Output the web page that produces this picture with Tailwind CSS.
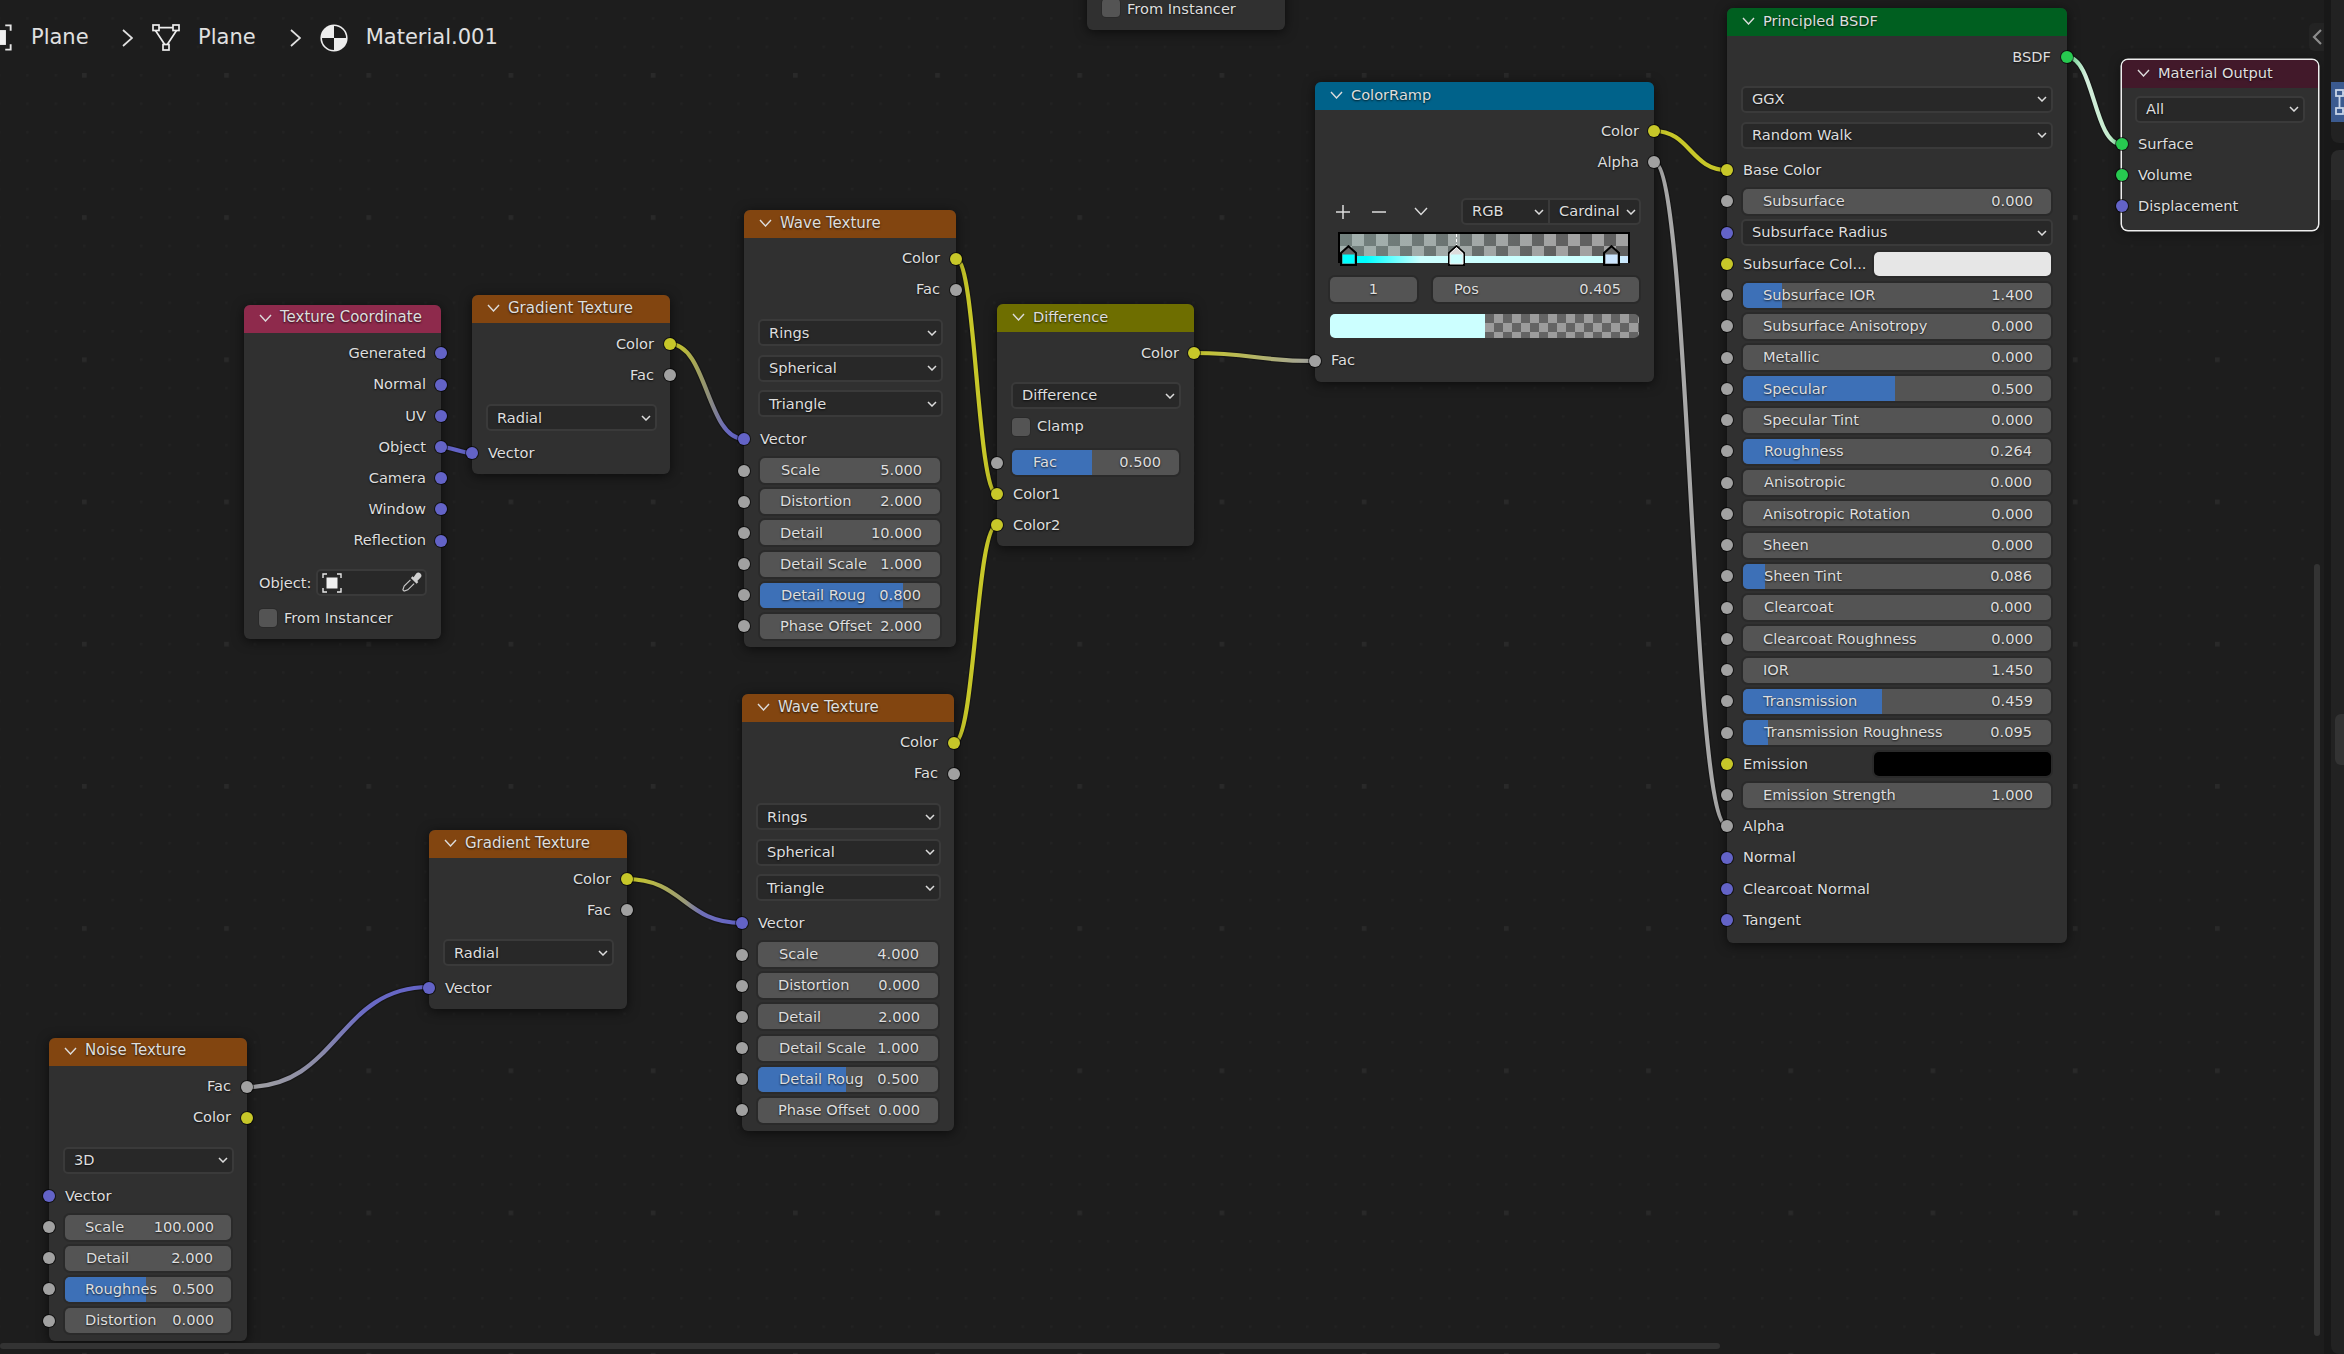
<!DOCTYPE html>
<html lang="en">
<head>
<meta charset="utf-8">
<title>Shader nodes</title>
<script src="https://cdn.jsdelivr.net/npm/@tailwindcss/browser@4"></script>
</head>
<body class="bg-[#1d1d1d]">
<svg class="absolute w-0 h-0">
  <symbol id="hc" viewBox="0 0 13 8"><path d="M1 1l5.5 6L12 1" fill="none" stroke="#dcdcdc" stroke-width="1.4"/></symbol>
  <symbol id="dc" viewBox="0 0 10 6"><path d="M1 1l4 4 4-4" fill="none" stroke="#dcdcdc" stroke-width="1.5"/></symbol>
  <symbol id="ob" viewBox="0 0 20 20"><path d="M1 5V1h4M15 1h4v4M19 15v4h-4M5 19H1v-4" fill="none" stroke="#e6e6e6" stroke-width="1.4"/><rect x="4.5" y="4.5" width="11" height="11" fill="#f0f0f0"/></symbol>
</svg>
<div class="relative w-[2344px] h-[1354px] overflow-hidden bg-[#1d1d1d] font-['DejaVu_Sans',sans-serif] text-[14.6px] leading-none text-[#dedede] [text-shadow:0_1px_2px_rgba(0,0,0,.75)]">

  <!-- grid -->
  <svg class="absolute inset-0" width="2344" height="1354">
    <defs>
      <pattern id="gs" patternUnits="userSpaceOnUse" x="83" y="74" width="28.44" height="28.44"><rect width="2.4" height="2.4" fill="#222222"/></pattern>
      <pattern id="gb" patternUnits="userSpaceOnUse" x="82" y="73" width="142.2" height="142.2"><rect width="4.6" height="4.6" fill="#292929"/></pattern>
      <linearGradient id="g2" gradientUnits="userSpaceOnUse" x1="676" x2="740" y1="0" y2="0"><stop offset="0" stop-color="#c7c729"/><stop offset=".5" stop-color="#8f8f78"/><stop offset=".8" stop-color="#6868c0"/><stop offset="1" stop-color="#6363c7"/></linearGradient>
      <linearGradient id="g3" gradientUnits="userSpaceOnUse" x1="1194" x2="1315" y1="0" y2="0"><stop offset="0" stop-color="#c7c729"/><stop offset="1" stop-color="#a1a1a1"/></linearGradient>
      <linearGradient id="g4" gradientUnits="userSpaceOnUse" x1="247" x2="429" y1="0" y2="0"><stop offset="0" stop-color="#a1a1a1"/><stop offset=".4" stop-color="#8a8aa8"/><stop offset=".65" stop-color="#6a6ac4"/><stop offset="1" stop-color="#6363c7"/></linearGradient>
      <linearGradient id="g5" gradientUnits="userSpaceOnUse" x1="632" x2="738" y1="0" y2="0"><stop offset="0" stop-color="#c7c729"/><stop offset=".5" stop-color="#9a9a78"/><stop offset=".65" stop-color="#6f6fb8"/><stop offset="1" stop-color="#6363c7"/></linearGradient>
      <linearGradient id="g6" gradientUnits="userSpaceOnUse" x1="2067" x2="2121" y1="0" y2="0"><stop offset="0" stop-color="#5fd98a"/><stop offset=".35" stop-color="#d4ecdc"/><stop offset=".8" stop-color="#c4eccd"/><stop offset="1" stop-color="#5fd98a"/></linearGradient>
    </defs>
    <rect width="2344" height="1354" fill="url(#gs)"/>
    <rect width="2344" height="1354" fill="url(#gb)"/>
  </svg>

  <!-- wires -->
  <svg class="absolute inset-0" width="2344" height="1354" fill="none">
    <g stroke="#141414" stroke-opacity=".75" stroke-width="6.6">
      <path d="M441 447C452 447 461 453 472 453"/>
      <path d="M670 344C707 344 707 439 744 439"/>
      <path d="M956 259C976 259 977 494 997 494"/>
      <path d="M954 743C975 743 976 525 997 525"/>
      <path d="M1194 353C1254 353 1255 361 1315 361"/>
      <path d="M1654 131C1690 131 1691 170 1727 170"/>
      <path d="M1654 162C1690 162 1691 826 1727 826"/>
      <path d="M2067 57C2094 57 2094 144 2121 144"/>
      <path d="M247 1087C338 1087 338 987 429 987"/>
      <path d="M626 879C684 879 684 923 742 923"/>
    </g>
    <g stroke-width="4.2">
      <path stroke="#6363c7" d="M441 447C452 447 461 453 472 453"/>
      <path stroke="url(#g2)" d="M670 344C707 344 707 439 744 439"/>
      <path stroke="#c7c729" d="M956 259C976 259 977 494 997 494"/>
      <path stroke="#c7c729" d="M954 743C975 743 976 525 997 525"/>
      <path stroke="url(#g3)" d="M1194 353C1254 353 1255 361 1315 361"/>
      <path stroke="#c7c729" d="M1654 131C1690 131 1691 170 1727 170"/>
      <path stroke="#a8a8a8" d="M1654 162C1690 162 1691 826 1727 826"/>
      <path stroke="url(#g6)" d="M2067 57C2094 57 2094 144 2121 144"/>
      <path stroke="url(#g4)" d="M247 1087C338 1087 338 987 429 987"/>
      <path stroke="url(#g5)" d="M626 879C684 879 684 923 742 923"/>
    </g>
  </svg>

  <!-- breadcrumb -->
  <div class="absolute left-[-15px] top-[24px] h-[27px] flex items-center text-[21px] text-[#e0e0e0] [text-shadow:none]">
    <svg class="w-[27px] h-[27px]"><use href="#ob"/></svg>
    <span class="ml-[19px]">Plane</span>
    <svg class="ml-[33px] w-[11px] h-[18px]" viewBox="0 0 11 18" fill="none"><path d="M1 1l9 8-9 8" stroke="#e0e0e0" stroke-width="1.7"/></svg>
    <svg class="ml-[19px] w-[28px] h-[27px]" viewBox="0 0 28 27" fill="none" stroke="#ededed" stroke-width="1.7"><rect x="1" y="1" width="6" height="5.5"/><rect x="21" y="1" width="6" height="5.5"/><rect x="11" y="20.5" width="6" height="5.5"/><path d="M7 3.7h14M3.5 6.5l9.2 14M24.5 6.5l-9.2 14"/></svg>
    <span class="ml-[18.5px]">Plane</span>
    <svg class="ml-[34px] w-[11px] h-[18px]" viewBox="0 0 11 18" fill="none"><path d="M1 1l9 8-9 8" stroke="#e0e0e0" stroke-width="1.7"/></svg>
    <svg class="ml-[19px] w-[28px] h-[28px]" viewBox="0 0 28 28"><circle cx="14" cy="14" r="13.6" fill="#ededed"/><path d="M14 14V2A12 12 0 0 1 26 14zM14 14v12A12 12 0 0 1 2 14z" fill="#1d1d1d"/></svg>
    <span class="ml-[18px]">Material.001</span>
  </div>

  <!-- clipped top node -->
  <div class="absolute left-[1087px] top-[-20px] w-[198px] h-[50px] rounded-[6px] bg-[#303030] shadow-[0_2px_12px_rgba(0,0,0,.6)] flex items-end pl-[15px] pb-[13px]">
    <span class="size-[18px] rounded-[4px] bg-[#545454] ring-1 ring-[#2a2a2a]"></span><span class="ml-[7px]">From Instancer</span>
  </div>

  <!-- Texture Coordinate -->
  <div class="absolute left-[244px] top-[304.5px] w-[197px] rounded-[6px] bg-[#303030] shadow-[0_2px_12px_rgba(0,0,0,.6)] pb-[7.5px]">
    <div class="h-[28px] rounded-t-[6px] bg-[#8e2a4c] flex items-center pl-[15px] pb-[1.5px] gap-[8px]"><svg class="w-[13px] h-[8px]"><use href="#hc"/></svg><span class="text-[15px]">Texture Coordinate</span></div>
    <div class="pt-[5.4px]">
      <div class="relative h-[31.2px] flex items-center justify-end pr-[15px]">Generated<span class="absolute right-[-6px] top-1/2 -translate-y-1/2 size-[12px] rounded-full bg-[#6363c7] ring-1 ring-black/60"></span></div>
      <div class="relative h-[31.2px] flex items-center justify-end pr-[15px]">Normal<span class="absolute right-[-6px] top-1/2 -translate-y-1/2 size-[12px] rounded-full bg-[#6363c7] ring-1 ring-black/60"></span></div>
      <div class="relative h-[31.2px] flex items-center justify-end pr-[15px]">UV<span class="absolute right-[-6px] top-1/2 -translate-y-1/2 size-[12px] rounded-full bg-[#6363c7] ring-1 ring-black/60"></span></div>
      <div class="relative h-[31.2px] flex items-center justify-end pr-[15px]">Object<span class="absolute right-[-6px] top-1/2 -translate-y-1/2 size-[12px] rounded-full bg-[#6363c7] ring-1 ring-black/60"></span></div>
      <div class="relative h-[31.2px] flex items-center justify-end pr-[15px]">Camera<span class="absolute right-[-6px] top-1/2 -translate-y-1/2 size-[12px] rounded-full bg-[#6363c7] ring-1 ring-black/60"></span></div>
      <div class="relative h-[31.2px] flex items-center justify-end pr-[15px]">Window<span class="absolute right-[-6px] top-1/2 -translate-y-1/2 size-[12px] rounded-full bg-[#6363c7] ring-1 ring-black/60"></span></div>
      <div class="relative h-[31.2px] flex items-center justify-end pr-[15px]">Reflection<span class="absolute right-[-6px] top-1/2 -translate-y-1/2 size-[12px] rounded-full bg-[#6363c7] ring-1 ring-black/60"></span></div>
    </div>
    <div class="mt-[13.2px] h-[27px] flex items-center pl-[15px] pr-[14px]">
      <span class="w-[57px]">Object:</span>
      <div class="flex-1 h-[27px] rounded-[5px] bg-[#282828] border-2 border-[#3a3a3a] flex items-center justify-between pl-[4px] pr-[3px]">
        <svg class="w-[20px] h-[20px]"><use href="#ob"/></svg>
        <svg class="w-[21px] h-[21px]" viewBox="0 0 20 20"><path d="M14.5 1.5a2.6 2.6 0 0 1 4 4l-3 3 1 1-1.6 1.6-5.5-5.5 1.6-1.6 1 1z" fill="#d0d0d0"/><path d="M9 7.5l-6 6-1.2 3.5 1.2 1.2 3.500-1.2 6-6" fill="none" stroke="#c8c8c8" stroke-width="1.1"/></svg>
      </div>
    </div>
    <div class="mt-[8px] h-[27px] flex items-center pl-[15px]"><span class="size-[18px] rounded-[4px] bg-[#545454] ring-1 ring-[#2a2a2a]"></span><span class="ml-[7px]">From Instancer</span></div>
  </div>

  <!-- Gradient Texture 1 -->
  <div class="absolute left-[472px] top-[295px] w-[198px] rounded-[6px] bg-[#303030] shadow-[0_2px_12px_rgba(0,0,0,.6)] pb-[5.4px]">
    <div class="h-[28px] rounded-t-[6px] bg-[#824510] flex items-center pl-[15px] pb-[1.5px] gap-[8px]"><svg class="w-[13px] h-[8px]"><use href="#hc"/></svg><span class="text-[15px]">Gradient Texture</span></div>
    <div class="pt-[5.4px]">
      <div class="relative h-[31.2px] flex items-center justify-end pr-[16px]">Color<span class="absolute right-[-6px] top-1/2 -translate-y-1/2 size-[12px] rounded-full bg-[#c7c729] ring-1 ring-black/60"></span></div>
      <div class="relative h-[31.2px] flex items-center justify-end pr-[16px]">Fac<span class="absolute right-[-6px] top-1/2 -translate-y-1/2 size-[12px] rounded-full bg-[#a1a1a1] ring-1 ring-black/60"></span></div>
    </div>
    <div class="mt-[13.7px] ml-[14px] mr-[13px] h-[27px] rounded-[5px] bg-[#282828] border-2 border-[#3a3a3a] flex items-center justify-between pl-[9px] pr-[4px]"><span>Radial</span><svg class="w-[10px] h-[6px]"><use href="#dc"/></svg></div>
    <div class="mt-[5.9px] relative h-[31.2px] flex items-center pl-[16px]"><span class="absolute left-[-6px] top-1/2 -translate-y-1/2 size-[12px] rounded-full bg-[#6363c7] ring-1 ring-black/60"></span>Vector</div>
  </div>

  <!-- Gradient Texture 2 -->
  <div class="absolute left-[429px] top-[830px] w-[198px] rounded-[6px] bg-[#303030] shadow-[0_2px_12px_rgba(0,0,0,.6)] pb-[5.4px]">
    <div class="h-[28px] rounded-t-[6px] bg-[#824510] flex items-center pl-[15px] pb-[1.5px] gap-[8px]"><svg class="w-[13px] h-[8px]"><use href="#hc"/></svg><span class="text-[15px]">Gradient Texture</span></div>
    <div class="pt-[5.4px]">
      <div class="relative h-[31.2px] flex items-center justify-end pr-[16px]">Color<span class="absolute right-[-6px] top-1/2 -translate-y-1/2 size-[12px] rounded-full bg-[#c7c729] ring-1 ring-black/60"></span></div>
      <div class="relative h-[31.2px] flex items-center justify-end pr-[16px]">Fac<span class="absolute right-[-6px] top-1/2 -translate-y-1/2 size-[12px] rounded-full bg-[#a1a1a1] ring-1 ring-black/60"></span></div>
    </div>
    <div class="mt-[13.7px] ml-[14px] mr-[13px] h-[27px] rounded-[5px] bg-[#282828] border-2 border-[#3a3a3a] flex items-center justify-between pl-[9px] pr-[4px]"><span>Radial</span><svg class="w-[10px] h-[6px]"><use href="#dc"/></svg></div>
    <div class="mt-[5.9px] relative h-[31.2px] flex items-center pl-[16px]"><span class="absolute left-[-6px] top-1/2 -translate-y-1/2 size-[12px] rounded-full bg-[#6363c7] ring-1 ring-black/60"></span>Vector</div>
  </div>

  <!-- Wave Texture 1 -->
  <div class="absolute left-[744px] top-[210px] w-[212px] rounded-[6px] bg-[#303030] shadow-[0_2px_12px_rgba(0,0,0,.6)] pb-[5.4px]">
    <div class="h-[28px] rounded-t-[6px] bg-[#824510] flex items-center pl-[15px] pb-[1.5px] gap-[8px]"><svg class="w-[13px] h-[8px]"><use href="#hc"/></svg><span class="text-[15px]">Wave Texture</span></div>
    <div class="pt-[5px]">
      <div class="relative h-[31.2px] flex items-center justify-end pr-[16px]">Color<span class="absolute right-[-6px] top-1/2 -translate-y-1/2 size-[12px] rounded-full bg-[#c7c729] ring-1 ring-black/60"></span></div>
      <div class="relative h-[31.2px] flex items-center justify-end pr-[16px]">Fac<span class="absolute right-[-6px] top-1/2 -translate-y-1/2 size-[12px] rounded-full bg-[#a1a1a1] ring-1 ring-black/60"></span></div>
    </div>
    <div class="mt-[14px] ml-[14px] mr-[13px] h-[27px] rounded-[5px] bg-[#282828] border-2 border-[#3a3a3a] flex items-center justify-between pl-[9px] pr-[4px]"><span>Rings</span><svg class="w-[10px] h-[6px]"><use href="#dc"/></svg></div>
    <div class="mt-[8.5px] ml-[14px] mr-[13px] h-[27px] rounded-[5px] bg-[#282828] border-2 border-[#3a3a3a] flex items-center justify-between pl-[9px] pr-[4px]"><span>Spherical</span><svg class="w-[10px] h-[6px]"><use href="#dc"/></svg></div>
    <div class="mt-[8.5px] ml-[14px] mr-[13px] h-[27px] rounded-[5px] bg-[#282828] border-2 border-[#3a3a3a] flex items-center justify-between pl-[9px] pr-[4px]"><span>Triangle</span><svg class="w-[10px] h-[6px]"><use href="#dc"/></svg></div>
    <div class="mt-[6.4px] relative h-[31.2px] flex items-center pl-[16px]"><span class="absolute left-[-6px] top-1/2 -translate-y-1/2 size-[12px] rounded-full bg-[#6363c7] ring-1 ring-black/60"></span>Vector</div>
    <div class="relative h-[31.2px] px-4 flex items-center"><span class="absolute left-[-6px] top-1/2 -translate-y-1/2 size-[12px] rounded-full bg-[#a1a1a1] ring-1 ring-black/60"></span><div class="relative flex-1 h-[25px] rounded-[5px] bg-[#545454] ring-2 ring-[#2a2a2a] overflow-hidden flex items-center justify-between pl-[21px] pr-[18px]"><span class="relative">Scale</span><span class="relative">5.000</span></div></div>
    <div class="relative h-[31.2px] px-4 flex items-center"><span class="absolute left-[-6px] top-1/2 -translate-y-1/2 size-[12px] rounded-full bg-[#a1a1a1] ring-1 ring-black/60"></span><div class="relative flex-1 h-[25px] rounded-[5px] bg-[#545454] ring-2 ring-[#2a2a2a] overflow-hidden flex items-center justify-between pl-[20px] pr-[18px]"><span class="relative">Distortion</span><span class="relative">2.000</span></div></div>
    <div class="relative h-[31.2px] px-4 flex items-center"><span class="absolute left-[-6px] top-1/2 -translate-y-1/2 size-[12px] rounded-full bg-[#a1a1a1] ring-1 ring-black/60"></span><div class="relative flex-1 h-[25px] rounded-[5px] bg-[#545454] ring-2 ring-[#2a2a2a] overflow-hidden flex items-center justify-between pl-[20px] pr-[18px]"><span class="relative">Detail</span><span class="relative">10.000</span></div></div>
    <div class="relative h-[31.2px] px-4 flex items-center"><span class="absolute left-[-6px] top-1/2 -translate-y-1/2 size-[12px] rounded-full bg-[#a1a1a1] ring-1 ring-black/60"></span><div class="relative flex-1 h-[25px] rounded-[5px] bg-[#545454] ring-2 ring-[#2a2a2a] overflow-hidden flex items-center justify-between pl-[20px] pr-[18px]"><span class="relative">Detail Scale</span><span class="relative">1.000</span></div></div>
    <div class="relative h-[31.2px] px-4 flex items-center"><span class="absolute left-[-6px] top-1/2 -translate-y-1/2 size-[12px] rounded-full bg-[#a1a1a1] ring-1 ring-black/60"></span><div class="relative flex-1 h-[25px] rounded-[5px] bg-[#545454] ring-2 ring-[#2a2a2a] overflow-hidden flex items-center justify-between pl-[21px] pr-[19px]"><span class="absolute inset-y-0 left-0 w-[79.5%] bg-[#3d70b7]"></span><span class="relative">Detail Roug</span><span class="relative">0.800</span></div></div>
    <div class="relative h-[31.2px] px-4 flex items-center"><span class="absolute left-[-6px] top-1/2 -translate-y-1/2 size-[12px] rounded-full bg-[#a1a1a1] ring-1 ring-black/60"></span><div class="relative flex-1 h-[25px] rounded-[5px] bg-[#545454] ring-2 ring-[#2a2a2a] overflow-hidden flex items-center justify-between pl-[20px] pr-[18px]"><span class="relative">Phase Offset</span><span class="relative">2.000</span></div></div>
  </div>

  <!-- Wave Texture 2 -->
  <div class="absolute left-[742px] top-[694px] w-[212px] rounded-[6px] bg-[#303030] shadow-[0_2px_12px_rgba(0,0,0,.6)] pb-[5.4px]">
    <div class="h-[28px] rounded-t-[6px] bg-[#824510] flex items-center pl-[15px] pb-[1.5px] gap-[8px]"><svg class="w-[13px] h-[8px]"><use href="#hc"/></svg><span class="text-[15px]">Wave Texture</span></div>
    <div class="pt-[5px]">
      <div class="relative h-[31.2px] flex items-center justify-end pr-[16px]">Color<span class="absolute right-[-6px] top-1/2 -translate-y-1/2 size-[12px] rounded-full bg-[#c7c729] ring-1 ring-black/60"></span></div>
      <div class="relative h-[31.2px] flex items-center justify-end pr-[16px]">Fac<span class="absolute right-[-6px] top-1/2 -translate-y-1/2 size-[12px] rounded-full bg-[#a1a1a1] ring-1 ring-black/60"></span></div>
    </div>
    <div class="mt-[14px] ml-[14px] mr-[13px] h-[27px] rounded-[5px] bg-[#282828] border-2 border-[#3a3a3a] flex items-center justify-between pl-[9px] pr-[4px]"><span>Rings</span><svg class="w-[10px] h-[6px]"><use href="#dc"/></svg></div>
    <div class="mt-[8.5px] ml-[14px] mr-[13px] h-[27px] rounded-[5px] bg-[#282828] border-2 border-[#3a3a3a] flex items-center justify-between pl-[9px] pr-[4px]"><span>Spherical</span><svg class="w-[10px] h-[6px]"><use href="#dc"/></svg></div>
    <div class="mt-[8.5px] ml-[14px] mr-[13px] h-[27px] rounded-[5px] bg-[#282828] border-2 border-[#3a3a3a] flex items-center justify-between pl-[9px] pr-[4px]"><span>Triangle</span><svg class="w-[10px] h-[6px]"><use href="#dc"/></svg></div>
    <div class="mt-[6.4px] relative h-[31.2px] flex items-center pl-[16px]"><span class="absolute left-[-6px] top-1/2 -translate-y-1/2 size-[12px] rounded-full bg-[#6363c7] ring-1 ring-black/60"></span>Vector</div>
    <div class="relative h-[31.2px] px-4 flex items-center"><span class="absolute left-[-6px] top-1/2 -translate-y-1/2 size-[12px] rounded-full bg-[#a1a1a1] ring-1 ring-black/60"></span><div class="relative flex-1 h-[25px] rounded-[5px] bg-[#545454] ring-2 ring-[#2a2a2a] overflow-hidden flex items-center justify-between pl-[21px] pr-[19px]"><span class="relative">Scale</span><span class="relative">4.000</span></div></div>
    <div class="relative h-[31.2px] px-4 flex items-center"><span class="absolute left-[-6px] top-1/2 -translate-y-1/2 size-[12px] rounded-full bg-[#a1a1a1] ring-1 ring-black/60"></span><div class="relative flex-1 h-[25px] rounded-[5px] bg-[#545454] ring-2 ring-[#2a2a2a] overflow-hidden flex items-center justify-between pl-[20px] pr-[18px]"><span class="relative">Distortion</span><span class="relative">0.000</span></div></div>
    <div class="relative h-[31.2px] px-4 flex items-center"><span class="absolute left-[-6px] top-1/2 -translate-y-1/2 size-[12px] rounded-full bg-[#a1a1a1] ring-1 ring-black/60"></span><div class="relative flex-1 h-[25px] rounded-[5px] bg-[#545454] ring-2 ring-[#2a2a2a] overflow-hidden flex items-center justify-between pl-[20px] pr-[18px]"><span class="relative">Detail</span><span class="relative">2.000</span></div></div>
    <div class="relative h-[31.2px] px-4 flex items-center"><span class="absolute left-[-6px] top-1/2 -translate-y-1/2 size-[12px] rounded-full bg-[#a1a1a1] ring-1 ring-black/60"></span><div class="relative flex-1 h-[25px] rounded-[5px] bg-[#545454] ring-2 ring-[#2a2a2a] overflow-hidden flex items-center justify-between pl-[21px] pr-[19px]"><span class="relative">Detail Scale</span><span class="relative">1.000</span></div></div>
    <div class="relative h-[31.2px] px-4 flex items-center"><span class="absolute left-[-6px] top-1/2 -translate-y-1/2 size-[12px] rounded-full bg-[#a1a1a1] ring-1 ring-black/60"></span><div class="relative flex-1 h-[25px] rounded-[5px] bg-[#545454] ring-2 ring-[#2a2a2a] overflow-hidden flex items-center justify-between pl-[21px] pr-[19px]"><span class="absolute inset-y-0 left-0 w-[48.7%] bg-[#3d70b7]"></span><span class="relative">Detail Roug</span><span class="relative">0.500</span></div></div>
    <div class="relative h-[31.2px] px-4 flex items-center"><span class="absolute left-[-6px] top-1/2 -translate-y-1/2 size-[12px] rounded-full bg-[#a1a1a1] ring-1 ring-black/60"></span><div class="relative flex-1 h-[25px] rounded-[5px] bg-[#545454] ring-2 ring-[#2a2a2a] overflow-hidden flex items-center justify-between pl-[20px] pr-[18px]"><span class="relative">Phase Offset</span><span class="relative">0.000</span></div></div>
  </div>

  <!-- Noise Texture -->
  <div class="absolute left-[49px] top-[1037.5px] w-[198px] rounded-[6px] bg-[#303030] shadow-[0_2px_12px_rgba(0,0,0,.6)] pb-[5px]">
    <div class="h-[28px] rounded-t-[6px] bg-[#824510] flex items-center pl-[15px] pb-[1.5px] gap-[8px]"><svg class="w-[13px] h-[8px]"><use href="#hc"/></svg><span class="text-[15px]">Noise Texture</span></div>
    <div class="pt-[5.5px]">
      <div class="relative h-[31.2px] flex items-center justify-end pr-[16px]">Fac<span class="absolute right-[-6px] top-1/2 -translate-y-1/2 size-[12px] rounded-full bg-[#a1a1a1] ring-1 ring-black/60"></span></div>
      <div class="relative h-[31.2px] flex items-center justify-end pr-[16px]">Color<span class="absolute right-[-6px] top-1/2 -translate-y-1/2 size-[12px] rounded-full bg-[#c7c729] ring-1 ring-black/60"></span></div>
    </div>
    <div class="mt-[13.4px] ml-[14px] mr-[13px] h-[27px] rounded-[5px] bg-[#282828] border-2 border-[#3a3a3a] flex items-center justify-between pl-[9px] pr-[4px]"><span>3D</span><svg class="w-[10px] h-[6px]"><use href="#dc"/></svg></div>
    <div class="mt-[6.5px] relative h-[31.2px] flex items-center pl-[16px]"><span class="absolute left-[-6px] top-1/2 -translate-y-1/2 size-[12px] rounded-full bg-[#6363c7] ring-1 ring-black/60"></span>Vector</div>
    <div class="relative h-[31.2px] px-4 flex items-center"><span class="absolute left-[-6px] top-1/2 -translate-y-1/2 size-[12px] rounded-full bg-[#a1a1a1] ring-1 ring-black/60"></span><div class="relative flex-1 h-[25px] rounded-[5px] bg-[#545454] ring-2 ring-[#2a2a2a] overflow-hidden flex items-center justify-between pl-[20px] pr-[17px]"><span class="relative">Scale</span><span class="relative">100.000</span></div></div>
    <div class="relative h-[31.2px] px-4 flex items-center"><span class="absolute left-[-6px] top-1/2 -translate-y-1/2 size-[12px] rounded-full bg-[#a1a1a1] ring-1 ring-black/60"></span><div class="relative flex-1 h-[25px] rounded-[5px] bg-[#545454] ring-2 ring-[#2a2a2a] overflow-hidden flex items-center justify-between pl-[21px] pr-[18px]"><span class="relative">Detail</span><span class="relative">2.000</span></div></div>
    <div class="relative h-[31.2px] px-4 flex items-center"><span class="absolute left-[-6px] top-1/2 -translate-y-1/2 size-[12px] rounded-full bg-[#a1a1a1] ring-1 ring-black/60"></span><div class="relative flex-1 h-[25px] rounded-[5px] bg-[#545454] ring-2 ring-[#2a2a2a] overflow-hidden flex items-center justify-between pl-[20px] pr-[17px]"><span class="absolute inset-y-0 left-0 w-[48.7%] bg-[#3d70b7]"></span><span class="relative">Roughnes</span><span class="relative">0.500</span></div></div>
    <div class="relative h-[31.2px] px-4 flex items-center"><span class="absolute left-[-6px] top-1/2 -translate-y-1/2 size-[12px] rounded-full bg-[#a1a1a1] ring-1 ring-black/60"></span><div class="relative flex-1 h-[25px] rounded-[5px] bg-[#545454] ring-2 ring-[#2a2a2a] overflow-hidden flex items-center justify-between pl-[20px] pr-[17px]"><span class="relative">Distortion</span><span class="relative">0.000</span></div></div>
  </div>

  <!-- Difference -->
  <div class="absolute left-[997px] top-[304px] w-[197px] rounded-[6px] bg-[#303030] shadow-[0_2px_12px_rgba(0,0,0,.6)] pb-[5.3px]">
    <div class="h-[28px] rounded-t-[6px] bg-[#6e6e00] flex items-center pl-[15px] pb-[1.5px] gap-[8px]"><svg class="w-[13px] h-[8px]"><use href="#hc"/></svg><span>Difference</span></div>
    <div class="pt-[5.7px]">
      <div class="relative h-[31.2px] flex items-center justify-end pr-[15px]">Color<span class="absolute right-[-6px] top-1/2 -translate-y-1/2 size-[12px] rounded-full bg-[#c7c729] ring-1 ring-black/60"></span></div>
    </div>
    <div class="mt-[13.3px] ml-[14px] mr-[13px] h-[27px] rounded-[5px] bg-[#282828] border-2 border-[#3a3a3a] flex items-center justify-between pl-[9px] pr-[4px]"><span>Difference</span><svg class="w-[10px] h-[6px]"><use href="#dc"/></svg></div>
    <div class="mt-[4px] h-[27px] flex items-center pl-[15px]"><span class="size-[18px] rounded-[4px] bg-[#545454] ring-1 ring-[#2a2a2a]"></span><span class="ml-[7px]">Clamp</span></div>
    <div class="mt-[6.9px] relative h-[31.2px] px-[15px] flex items-center"><span class="absolute left-[-6px] top-1/2 -translate-y-1/2 size-[12px] rounded-full bg-[#a1a1a1] ring-1 ring-black/60"></span><div class="relative flex-1 h-[25px] rounded-[5px] bg-[#545454] ring-2 ring-[#2a2a2a] overflow-hidden flex items-center justify-between pl-[21px] pr-[18px]"><span class="absolute inset-y-0 left-0 w-[48.2%] bg-[#3d70b7]"></span><span class="relative">Fac</span><span class="relative">0.500</span></div></div>
    <div class="relative h-[31.2px] flex items-center pl-[16px]"><span class="absolute left-[-6px] top-1/2 -translate-y-1/2 size-[12px] rounded-full bg-[#c7c729] ring-1 ring-black/60"></span>Color1</div>
    <div class="relative h-[31.2px] flex items-center pl-[16px]"><span class="absolute left-[-6px] top-1/2 -translate-y-1/2 size-[12px] rounded-full bg-[#c7c729] ring-1 ring-black/60"></span>Color2</div>
  </div>

  <!-- ColorRamp -->
  <div class="absolute left-[1315px] top-[82px] w-[339px] rounded-[6px] bg-[#303030] shadow-[0_2px_12px_rgba(0,0,0,.6)] pb-[5.4px]">
    <div class="h-[28px] rounded-t-[6px] bg-[#00628a] flex items-center pl-[15px] pb-[1.5px] gap-[8px]"><svg class="w-[13px] h-[8px]"><use href="#hc"/></svg><span>ColorRamp</span></div>
    <div class="pt-[5.4px]">
      <div class="relative h-[31.2px] flex items-center justify-end pr-[15px]">Color<span class="absolute right-[-6px] top-1/2 -translate-y-1/2 size-[12px] rounded-full bg-[#c7c729] ring-1 ring-black/60"></span></div>
      <div class="relative h-[31.2px] flex items-center justify-end pr-[15px]">Alpha<span class="absolute right-[-6px] top-1/2 -translate-y-1/2 size-[12px] rounded-full bg-[#a1a1a1] ring-1 ring-black/60"></span></div>
    </div>
    <div class="mt-[20.5px] h-[27px] flex items-center pl-[21px]">
      <svg class="w-[14px] h-[14px]" viewBox="0 0 14 14" fill="none" stroke="#dcdcdc" stroke-width="1.5"><path d="M0 7h14M7 0v14"/></svg>
      <svg class="ml-[22px] w-[14px] h-[14px]" viewBox="0 0 14 14" fill="none" stroke="#dcdcdc" stroke-width="1.5"><path d="M0 7h14"/></svg>
      <svg class="ml-[28px] w-[14px] h-[9px]" viewBox="0 0 14 9" fill="none" stroke="#dcdcdc" stroke-width="1.4"><path d="M1 1l6 6.5L13 1"/></svg>
      <div class="ml-[33px] w-[180px] h-[27px] rounded-[5px] bg-[#282828] border-2 border-[#3a3a3a] flex">
        <div class="w-[87px] flex items-center justify-between pl-[9px] pr-[4px] border-r-2 border-[#3a3a3a]"><span>RGB</span><svg class="w-[10px] h-[6px]"><use href="#dc"/></svg></div>
        <div class="flex-1 flex items-center justify-between pl-[9px] pr-[3px]"><span>Cardinal</span><svg class="w-[10px] h-[6px]"><use href="#dc"/></svg></div>
      </div>
    </div>
    <div class="relative mt-[6.3px] ml-[22.7px] w-[292px] h-[31px] flex flex-col border-2 border-b-0 border-black">
      <div class="flex-1 [background:linear-gradient(90deg,#a0d2c84d,#a0d2c82e_35%,#a0d2c800_75%),conic-gradient(#a2a2a2_25%,#606060_0_50%,#a2a2a2_0_75%,#606060_0)_0_0/24px_24px]"></div>
      <div class="h-[7px] bg-[linear-gradient(90deg,#00ffff,#00ffff_9%,#ccffff_28%,#ccffff_92%,#cce6ff)]"></div>
      <div class="absolute top-0 left-[116px] h-[13px] border-l-[1.5px] border-dashed border-white"></div>
      <svg class="absolute left-[0px] top-[11.7px] w-[17px] h-[21px]" viewBox="0 0 17 21"><path d="M8.5 1.2 16 8v12H1V8z" fill="#666" stroke="#000" stroke-width="2"/><rect x="2.5" y="9.5" width="12" height="9" fill="#00ffff"/></svg>
      <svg class="absolute left-[108px] top-[11.7px] w-[17px] h-[21px]" viewBox="0 0 17 21"><path d="M8.5 1.2 16 8v12H1V8z" fill="#dcdcdc" stroke="#000" stroke-width="2"/><path d="M8.5 2.5 15 8.500v10.500H2V8.500z" fill="#dcdcdc" stroke="#fff"/><rect x="2.500" y="9.500" width="12" height="9" fill="#ccffff"/></svg>
      <svg class="absolute left-[263px] top-[11.7px] w-[17px] h-[21px]" viewBox="0 0 17 21"><path d="M8.5 1.2 16 8v12H1V8z" fill="#666" stroke="#000" stroke-width="2"/><rect x="2.5" y="9.500" width="12" height="9" fill="#cce6ff"/></svg>
    </div>
    <div class="mt-[14.2px] ml-[15px] flex gap-[16px]">
      <div class="w-[87px] h-[25px] rounded-[5px] bg-[#545454] ring-2 ring-[#2a2a2a] flex items-center justify-center">1</div>
      <div class="w-[206px] h-[25px] rounded-[5px] bg-[#545454] ring-2 ring-[#2a2a2a] flex items-center justify-between pl-[21px] pr-[18px]"><span>Pos</span><span>0.405</span></div>
    </div>
    <div class="mt-[11.8px] mx-[15px] h-[24px] rounded-[5px] overflow-hidden flex">
      <div class="w-[155px] bg-[#ccffff]"></div>
      <div class="flex-1 [background:conic-gradient(#9c9c9c_25%,#646464_0_50%,#9c9c9c_0_75%,#646464_0)_0_0/18px_18px]"></div>
    </div>
    <div class="mt-[7.4px] relative h-[31.2px] flex items-center pl-[16px]"><span class="absolute left-[-6px] top-1/2 -translate-y-1/2 size-[12px] rounded-full bg-[#a1a1a1] ring-1 ring-black/60"></span>Fac</div>
  </div>

  <!-- Principled BSDF -->
  <div class="absolute left-[1727px] top-[8px] w-[340px] rounded-[6px] bg-[#303030] shadow-[0_2px_12px_rgba(0,0,0,.6)] pb-[7.6px]">
    <div class="h-[28px] rounded-t-[6px] bg-[#005f20] flex items-center pl-[15px] pb-[1.5px] gap-[8px]"><svg class="w-[13px] h-[8px]"><use href="#hc"/></svg><span>Principled BSDF</span></div>
    <div class="pt-[5.4px]">
      <div class="relative h-[31.2px] flex items-center justify-end pr-[16px]">BSDF<span class="absolute right-[-6px] top-1/2 -translate-y-1/2 size-[12px] rounded-full bg-[#27c950] ring-1 ring-black/60"></span></div>
    </div>
    <div class="mt-[13px] ml-[14px] mr-[14px] h-[27px] rounded-[5px] bg-[#282828] border-2 border-[#3a3a3a] flex items-center justify-between pl-[9px] pr-[4px]"><span>GGX</span><svg class="w-[10px] h-[6px]"><use href="#dc"/></svg></div>
    <div class="mt-[9px] ml-[14px] mr-[14px] h-[27px] rounded-[5px] bg-[#282828] border-2 border-[#3a3a3a] flex items-center justify-between pl-[9px] pr-[4px]"><span>Random Walk</span><svg class="w-[10px] h-[6px]"><use href="#dc"/></svg></div>
    <div class="mt-[5.9px] relative h-[31.25px] flex items-center pl-[16px]"><span class="absolute left-[-6px] top-1/2 -translate-y-1/2 size-[12px] rounded-full bg-[#c7c729] ring-1 ring-black/60"></span>Base Color</div>
    <div class="relative h-[31.25px] px-4 flex items-center"><span class="absolute left-[-6px] top-1/2 -translate-y-1/2 size-[12px] rounded-full bg-[#a1a1a1] ring-1 ring-black/60"></span><div class="relative flex-1 h-[25px] rounded-[5px] bg-[#545454] ring-2 ring-[#2a2a2a] overflow-hidden flex items-center justify-between pl-[20px] pr-[18px]"><span class="relative">Subsurface</span><span class="relative">0.000</span></div></div>
    <div class="relative h-[31.25px] px-[14px] flex items-center"><span class="absolute left-[-6px] top-1/2 -translate-y-1/2 size-[12px] rounded-full bg-[#6363c7] ring-1 ring-black/60"></span><div class="flex-1 h-[27px] rounded-[5px] bg-[#282828] border-2 border-[#3a3a3a] flex items-center justify-between pl-[9px] pr-[4px]"><span>Subsurface Radius</span><svg class="w-[10px] h-[6px]"><use href="#dc"/></svg></div></div>
    <div class="relative h-[31.25px] flex items-center pl-[16px] pr-[16px]"><span class="absolute left-[-6px] top-1/2 -translate-y-1/2 size-[12px] rounded-full bg-[#c7c729] ring-1 ring-black/60"></span><span class="flex-1">Subsurface Col...</span><span class="w-[177px] h-[24px] rounded-[5px] bg-[#e6e6e6] ring-2 ring-[#2a2a2a]"></span></div>
    <div class="relative h-[31.25px] px-4 flex items-center"><span class="absolute left-[-6px] top-1/2 -translate-y-1/2 size-[12px] rounded-full bg-[#a1a1a1] ring-1 ring-black/60"></span><div class="relative flex-1 h-[25px] rounded-[5px] bg-[#545454] ring-2 ring-[#2a2a2a] overflow-hidden flex items-center justify-between pl-[20px] pr-[18px]"><span class="absolute inset-y-0 left-0 w-[12.7%] bg-[#3d70b7]"></span><span class="relative">Subsurface IOR</span><span class="relative">1.400</span></div></div>
    <div class="relative h-[31.25px] px-4 flex items-center"><span class="absolute left-[-6px] top-1/2 -translate-y-1/2 size-[12px] rounded-full bg-[#a1a1a1] ring-1 ring-black/60"></span><div class="relative flex-1 h-[25px] rounded-[5px] bg-[#545454] ring-2 ring-[#2a2a2a] overflow-hidden flex items-center justify-between pl-[20px] pr-[18px]"><span class="relative">Subsurface Anisotropy</span><span class="relative">0.000</span></div></div>
    <div class="relative h-[31.25px] px-4 flex items-center"><span class="absolute left-[-6px] top-1/2 -translate-y-1/2 size-[12px] rounded-full bg-[#a1a1a1] ring-1 ring-black/60"></span><div class="relative flex-1 h-[25px] rounded-[5px] bg-[#545454] ring-2 ring-[#2a2a2a] overflow-hidden flex items-center justify-between pl-[20px] pr-[18px]"><span class="relative">Metallic</span><span class="relative">0.000</span></div></div>
    <div class="relative h-[31.25px] px-4 flex items-center"><span class="absolute left-[-6px] top-1/2 -translate-y-1/2 size-[12px] rounded-full bg-[#a1a1a1] ring-1 ring-black/60"></span><div class="relative flex-1 h-[25px] rounded-[5px] bg-[#545454] ring-2 ring-[#2a2a2a] overflow-hidden flex items-center justify-between pl-[20px] pr-[18px]"><span class="absolute inset-y-0 left-0 w-[49.4%] bg-[#3d70b7]"></span><span class="relative">Specular</span><span class="relative">0.500</span></div></div>
    <div class="relative h-[31.25px] px-4 flex items-center"><span class="absolute left-[-6px] top-1/2 -translate-y-1/2 size-[12px] rounded-full bg-[#a1a1a1] ring-1 ring-black/60"></span><div class="relative flex-1 h-[25px] rounded-[5px] bg-[#545454] ring-2 ring-[#2a2a2a] overflow-hidden flex items-center justify-between pl-[20px] pr-[18px]"><span class="relative">Specular Tint</span><span class="relative">0.000</span></div></div>
    <div class="relative h-[31.25px] px-4 flex items-center"><span class="absolute left-[-6px] top-1/2 -translate-y-1/2 size-[12px] rounded-full bg-[#a1a1a1] ring-1 ring-black/60"></span><div class="relative flex-1 h-[25px] rounded-[5px] bg-[#545454] ring-2 ring-[#2a2a2a] overflow-hidden flex items-center justify-between pl-[21px] pr-[19px]"><span class="absolute inset-y-0 left-0 w-[25%] bg-[#3d70b7]"></span><span class="relative">Roughness</span><span class="relative">0.264</span></div></div>
    <div class="relative h-[31.25px] px-4 flex items-center"><span class="absolute left-[-6px] top-1/2 -translate-y-1/2 size-[12px] rounded-full bg-[#a1a1a1] ring-1 ring-black/60"></span><div class="relative flex-1 h-[25px] rounded-[5px] bg-[#545454] ring-2 ring-[#2a2a2a] overflow-hidden flex items-center justify-between pl-[21px] pr-[19px]"><span class="relative">Anisotropic</span><span class="relative">0.000</span></div></div>
    <div class="relative h-[31.25px] px-4 flex items-center"><span class="absolute left-[-6px] top-1/2 -translate-y-1/2 size-[12px] rounded-full bg-[#a1a1a1] ring-1 ring-black/60"></span><div class="relative flex-1 h-[25px] rounded-[5px] bg-[#545454] ring-2 ring-[#2a2a2a] overflow-hidden flex items-center justify-between pl-[20px] pr-[18px]"><span class="relative">Anisotropic Rotation</span><span class="relative">0.000</span></div></div>
    <div class="relative h-[31.25px] px-4 flex items-center"><span class="absolute left-[-6px] top-1/2 -translate-y-1/2 size-[12px] rounded-full bg-[#a1a1a1] ring-1 ring-black/60"></span><div class="relative flex-1 h-[25px] rounded-[5px] bg-[#545454] ring-2 ring-[#2a2a2a] overflow-hidden flex items-center justify-between pl-[20px] pr-[18px]"><span class="relative">Sheen</span><span class="relative">0.000</span></div></div>
    <div class="relative h-[31.25px] px-4 flex items-center"><span class="absolute left-[-6px] top-1/2 -translate-y-1/2 size-[12px] rounded-full bg-[#a1a1a1] ring-1 ring-black/60"></span><div class="relative flex-1 h-[25px] rounded-[5px] bg-[#545454] ring-2 ring-[#2a2a2a] overflow-hidden flex items-center justify-between pl-[21px] pr-[19px]"><span class="absolute inset-y-0 left-0 w-[7%] bg-[#3d70b7]"></span><span class="relative">Sheen Tint</span><span class="relative">0.086</span></div></div>
    <div class="relative h-[31.25px] px-4 flex items-center"><span class="absolute left-[-6px] top-1/2 -translate-y-1/2 size-[12px] rounded-full bg-[#a1a1a1] ring-1 ring-black/60"></span><div class="relative flex-1 h-[25px] rounded-[5px] bg-[#545454] ring-2 ring-[#2a2a2a] overflow-hidden flex items-center justify-between pl-[21px] pr-[19px]"><span class="relative">Clearcoat</span><span class="relative">0.000</span></div></div>
    <div class="relative h-[31.25px] px-4 flex items-center"><span class="absolute left-[-6px] top-1/2 -translate-y-1/2 size-[12px] rounded-full bg-[#a1a1a1] ring-1 ring-black/60"></span><div class="relative flex-1 h-[25px] rounded-[5px] bg-[#545454] ring-2 ring-[#2a2a2a] overflow-hidden flex items-center justify-between pl-[20px] pr-[18px]"><span class="relative">Clearcoat Roughness</span><span class="relative">0.000</span></div></div>
    <div class="relative h-[31.25px] px-4 flex items-center"><span class="absolute left-[-6px] top-1/2 -translate-y-1/2 size-[12px] rounded-full bg-[#a1a1a1] ring-1 ring-black/60"></span><div class="relative flex-1 h-[25px] rounded-[5px] bg-[#545454] ring-2 ring-[#2a2a2a] overflow-hidden flex items-center justify-between pl-[20px] pr-[18px]"><span class="relative">IOR</span><span class="relative">1.450</span></div></div>
    <div class="relative h-[31.25px] px-4 flex items-center"><span class="absolute left-[-6px] top-1/2 -translate-y-1/2 size-[12px] rounded-full bg-[#a1a1a1] ring-1 ring-black/60"></span><div class="relative flex-1 h-[25px] rounded-[5px] bg-[#545454] ring-2 ring-[#2a2a2a] overflow-hidden flex items-center justify-between pl-[20px] pr-[18px]"><span class="absolute inset-y-0 left-0 w-[45%] bg-[#3d70b7]"></span><span class="relative">Transmission</span><span class="relative">0.459</span></div></div>
    <div class="relative h-[31.25px] px-4 flex items-center"><span class="absolute left-[-6px] top-1/2 -translate-y-1/2 size-[12px] rounded-full bg-[#a1a1a1] ring-1 ring-black/60"></span><div class="relative flex-1 h-[25px] rounded-[5px] bg-[#545454] ring-2 ring-[#2a2a2a] overflow-hidden flex items-center justify-between pl-[21px] pr-[19px]"><span class="absolute inset-y-0 left-0 w-[8.1%] bg-[#3d70b7]"></span><span class="relative">Transmission Roughness</span><span class="relative">0.095</span></div></div>
    <div class="relative h-[31.25px] flex items-center pl-[16px] pr-[16px]"><span class="absolute left-[-6px] top-1/2 -translate-y-1/2 size-[12px] rounded-full bg-[#c7c729] ring-1 ring-black/60"></span><span class="flex-1">Emission</span><span class="w-[177px] h-[24px] rounded-[5px] bg-black ring-2 ring-[#2a2a2a]"></span></div>
    <div class="relative h-[31.25px] px-4 flex items-center"><span class="absolute left-[-6px] top-1/2 -translate-y-1/2 size-[12px] rounded-full bg-[#a1a1a1] ring-1 ring-black/60"></span><div class="relative flex-1 h-[25px] rounded-[5px] bg-[#545454] ring-2 ring-[#2a2a2a] overflow-hidden flex items-center justify-between pl-[20px] pr-[18px]"><span class="relative">Emission Strength</span><span class="relative">1.000</span></div></div>
    <div class="relative h-[31.25px] flex items-center pl-[16px]"><span class="absolute left-[-6px] top-1/2 -translate-y-1/2 size-[12px] rounded-full bg-[#a1a1a1] ring-1 ring-black/60"></span>Alpha</div>
    <div class="relative h-[31.25px] flex items-center pl-[16px]"><span class="absolute left-[-6px] top-1/2 -translate-y-1/2 size-[12px] rounded-full bg-[#6363c7] ring-1 ring-black/60"></span>Normal</div>
    <div class="relative h-[31.25px] flex items-center pl-[16px]"><span class="absolute left-[-6px] top-1/2 -translate-y-1/2 size-[12px] rounded-full bg-[#6363c7] ring-1 ring-black/60"></span>Clearcoat Normal</div>
    <div class="relative h-[31.25px] flex items-center pl-[16px]"><span class="absolute left-[-6px] top-1/2 -translate-y-1/2 size-[12px] rounded-full bg-[#6363c7] ring-1 ring-black/60"></span>Tangent</div>
  </div>

  <!-- Material Output -->
  <div class="absolute left-[2122px] top-[60px] w-[196px] rounded-[6px] bg-[#303030] ring-[1.5px] ring-[#eeeeee] shadow-[0_2px_12px_rgba(0,0,0,.6)] pb-[8px]">
    <div class="h-[28px] rounded-t-[6px] bg-[#42192a] flex items-center pl-[15px] pb-[1.5px] gap-[8px]"><svg class="w-[13px] h-[8px]"><use href="#hc"/></svg><span>Material Output</span></div>
    <div class="mt-[7.5px] ml-[13px] mr-[13px] h-[27px] rounded-[5px] bg-[#282828] border-2 border-[#3a3a3a] flex items-center justify-between pl-[9px] pr-[4px]"><span>All</span><svg class="w-[10px] h-[6px]"><use href="#dc"/></svg></div>
    <div class="mt-[5.9px] relative h-[31.2px] flex items-center pl-[16px]"><span class="absolute left-[-6px] top-1/2 -translate-y-1/2 size-[12px] rounded-full bg-[#27c950] ring-1 ring-black/60"></span>Surface</div>
    <div class="relative h-[31.2px] flex items-center pl-[16px]"><span class="absolute left-[-6px] top-1/2 -translate-y-1/2 size-[12px] rounded-full bg-[#27c950] ring-1 ring-black/60"></span>Volume</div>
    <div class="relative h-[31.2px] flex items-center pl-[16px]"><span class="absolute left-[-6px] top-1/2 -translate-y-1/2 size-[12px] rounded-full bg-[#6363c7] ring-1 ring-black/60"></span>Displacement</div>
  </div>

  <!-- sidebar chevron tab and scrollbars -->
  <div class="absolute left-[2309px] top-[23px] w-[15px] h-[28px] rounded-l-[5px] bg-[#232323] flex items-center justify-center">
    <svg class="w-[10px] h-[16px]" viewBox="0 0 10 16" fill="none" stroke="#8c8c8c" stroke-width="2.2"><path d="M9 1 2 8l7 7"/></svg>
  </div>
  <div class="absolute left-[2314px] top-[564px] w-[6px] h-[772px] rounded-[3px] bg-[#333333]"></div>
  <div class="absolute left-0 top-[1343px] w-[1720px] h-[6px] rounded-[3px] bg-[#333333]"></div>

  <!-- right edge region -->
  <div class="absolute right-0 top-0 w-[20px] h-[1354px] bg-[#181818]">
    <div class="absolute left-[7px] right-0 top-0 h-[143px] rounded-bl-[8px] bg-[#222222]">
      <div class="absolute inset-x-0 top-[82px] h-[40px] bg-[#3b5a8f] pl-[4px] pt-[7px]">
        <svg class="w-[16px] h-[26px]" viewBox="0 0 16 26" fill="none" stroke="#c8d4e8" stroke-width="1.8"><rect x="1" y="1" width="7" height="6"/><rect x="1" y="19" width="7" height="6"/><path d="M4.5 7v12M8 4h8M8 22h8"/></svg>
      </div>
    </div>
    <div class="absolute left-[7px] right-0 top-[150px] h-[50px] rounded-tl-[8px] bg-[#2a2a2a]"></div>
    <div class="absolute left-[7px] right-0 top-[200px] bottom-0 rounded-bl-[8px] bg-[#222222]"></div>
    <div class="absolute left-[11px] right-0 top-[714px] h-[51px] rounded-l-[6px] bg-[#333333]"></div>
  </div>
</div>
</body>
</html>
